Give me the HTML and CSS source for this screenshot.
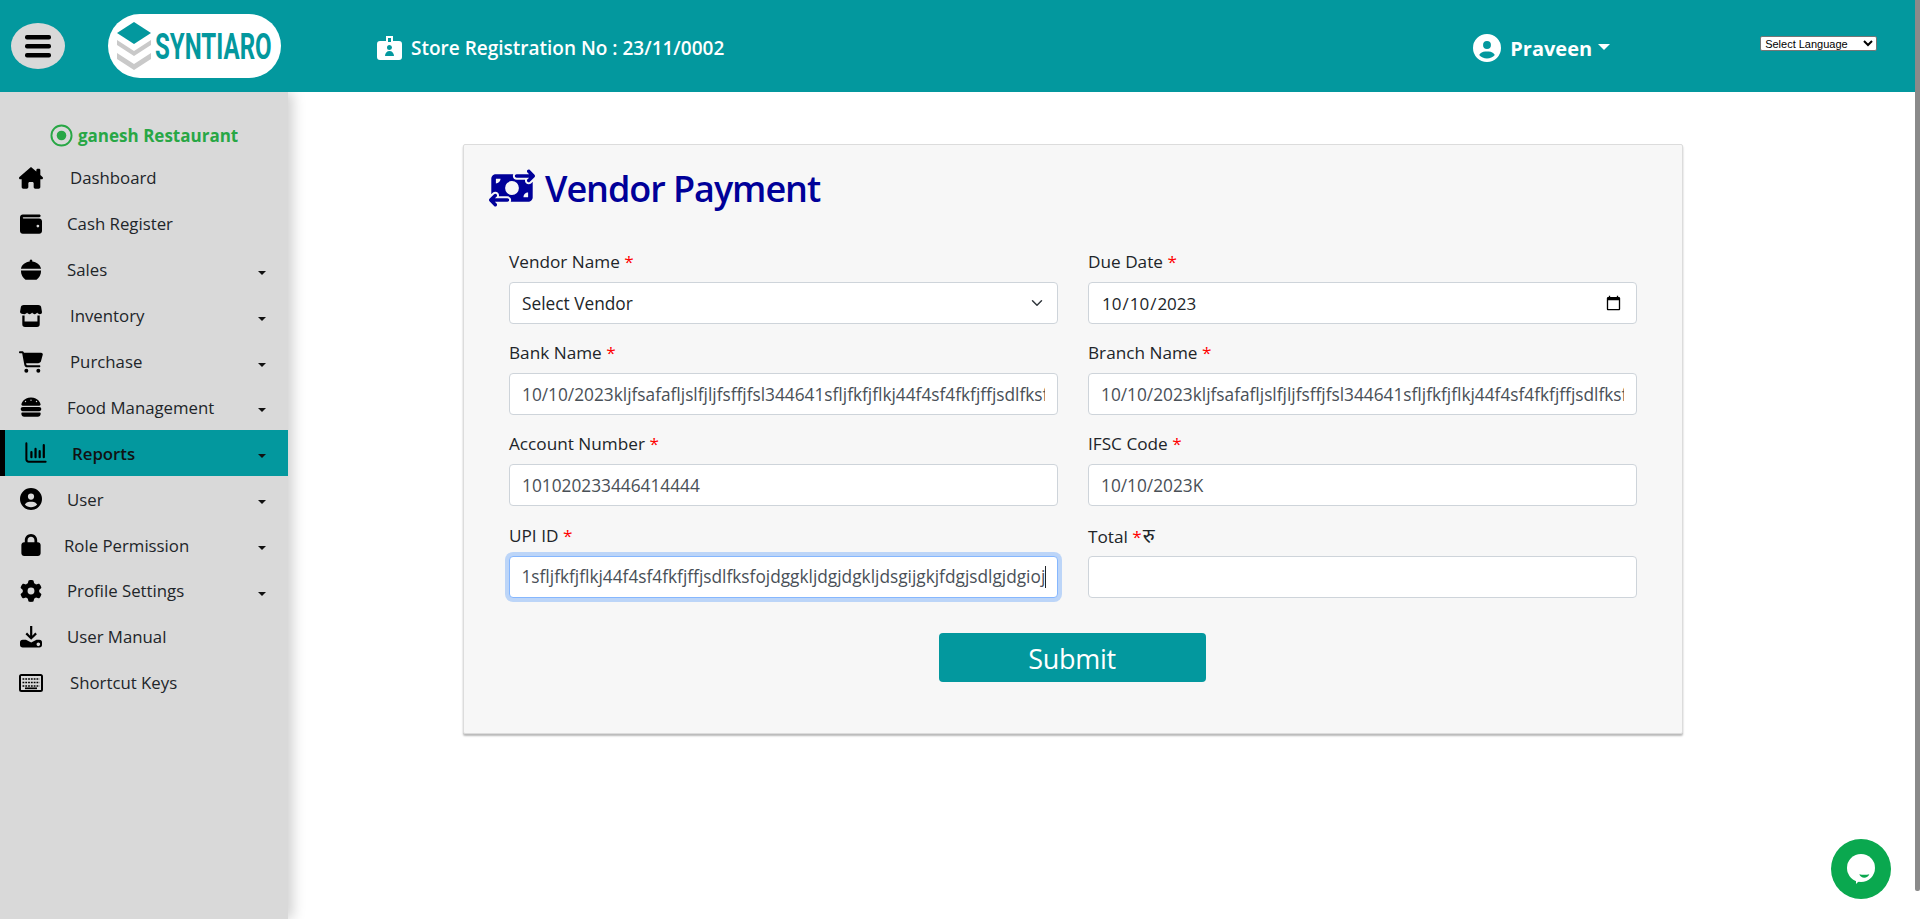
FILE: index.html
```html
<!DOCTYPE html>
<html lang="en">
<head>
<meta charset="UTF-8">
<title>Vendor Payment</title>
<link rel="stylesheet" href="styles.css">
</head>
<body>
<div class="page">
    <div class="page-main">
        <header class="topbar">
            <button class="menu-btn" type="button">
                <svg class="menu-icon" viewBox="0 0 26 24"><rect x="0" y="1" width="26" height="4.5" rx="2"/><rect x="0" y="10" width="26" height="4.5" rx="2"/><rect x="0" y="19" width="26" height="4.5" rx="2"/></svg>
            </button>
            <div class="logo">
                <svg class="logo-mark" viewBox="0 0 34 48">
                    <path fill="#03989e" d="M17 0L34 11 17 22 0 11z"/>
                    <path fill="#c9c9c9" d="M0 18l17 11 17-11v5L17 34 0 23z"/>
                    <path fill="#c9c9c9" d="M0 31l17 11 17-11v6L17 48 0 37z"/>
                </svg>
                <span class="logo-text">SYNTIARO</span>
            </div>
            <div class="store-no">
                <svg class="store-icon" viewBox="0 0 25 24"><path fill-rule="evenodd" d="M9 0h7v5h6a3 3 0 0 1 3 3v13a3 3 0 0 1-3 3H3a3 3 0 0 1-3-3V8a3 3 0 0 1 3-3h6zM11 2v4h3V2zM12.500 9a2.500 2.500 0 1 0 0 5 2.500 2.500 0 0 0 0-5zM8 20h9c0-3-2-5-4.500-5S8 17 8 20z"/></svg>
                <span>Store Registration No : 23/11/0002</span>
            </div>
            <div class="user-menu">
                <svg class="user-icon" viewBox="0 0 512 512"><path d="M399 384.200C376.900 345.800 335.400 320 288 320H224c-47.400 0-88.900 25.800-111 64.200c35.200 39.200 86.200 63.800 143 63.800s107.800-24.700 143-63.800zM0 256a256 256 0 1 1 512 0A256 256 0 1 1 0 256zm256 16a72 72 0 1 0 0-144 72 72 0 1 0 0 144z"/></svg>
                <span class="user-name">Praveen</span>
                <span class="user-caret"></span>
            </div>
            <select class="lang-select"><option>Select Language</option></select>
        </header>
        <div class="layout">
            <aside class="sidebar">
                <div class="outlet">
                    <svg class="outlet-icon" viewBox="0 0 24 24"><circle cx="12" cy="12" r="10.500" fill="none" stroke="#28a745" stroke-width="2"/><circle cx="12" cy="12" r="5" fill="#28a745"/></svg>
                    <span>ganesh Restaurant</span>
                </div>
                <nav>
                    <a class="nav-row">
                        <svg class="nav-icon" viewBox="0 0 576 512"><path d="M543.800 287.600c17 0 32-14 32-32.100c1-9-3-17-11-24L512 185V64c0-17.700-14.300-32-32-32H448c-17.700 0-32 14.300-32 32v36.700L309.500 7c-6-5-14-7-21-7s-15 1-22 8L10 231.500c-7 7-10 15-10 24c0 18 14 32.100 32 32.100h32v69.700c-.1 .9-.1 1.800-.1 2.800V472c0 22.100 17.900 40 40 40h16c1.200 0 2.400-.1 3.600-.2c1.500 .1 3 .2 4.500 .2H160h24c22.100 0 40-17.900 40-40V448 384c0-17.700 14.300-32 32-32h64c17.700 0 32 14.300 32 32v64 24c0 22.100 17.900 40 40 40h24 32.500c1.400 0 2.800 0 4.200-.1c1.100 .1 2.200 .1 3.300 .1h16c22.100 0 40-17.900 40-40V455.800c.3-2.600 .5-5.300 .5-8.100l-.7-160.200h32z"/></svg>
                        <span class="nav-label label-70">Dashboard</span>
                    </a>
                    <a class="nav-row">
                        <svg class="nav-icon" viewBox="0 0 512 512"><path d="M64 32C28.700 32 0 60.700 0 96V416c0 35.300 28.700 64 64 64H448c35.300 0 64-28.700 64-64V192c0-35.300-28.700-64-64-64H80c-8.800 0-16-7.200-16-16s7.200-16 16-16H448c17.700 0 32-14.300 32-32s-14.300-32-32-32H64zM416 272a32 32 0 1 1 0 64 32 32 0 1 1 0-64z"/></svg>
                        <span class="nav-label label-67">Cash Register</span>
                    </a>
                    <a class="nav-row">
                        <svg class="nav-icon" viewBox="0 0 24 24"><path d="M12 0.500a1.500 1.500 0 0 1 1.300 2.200C18 3.200 22 6 23 10.500H1C2 6 6 3.200 10.700 2.700A1.500 1.500 0 0 1 12 0.500z"/><path d="M1 12.500h22c0 4.500-2 8-5 10H6c-3-2-5-5.500-5-10z"/></svg>
                        <span class="nav-label label-67">Sales</span>
                        <span class="nav-caret"></span>
                    </a>
                    <a class="nav-row">
                        <svg class="nav-icon" viewBox="0 0 24 24"><path d="M4 0h16c1.500 0 2.500.8 3 2l1 5.500c0 1.500-1 2.500-2.500 2.500-1.300 0-2.300-.7-2.800-1.700-.5 1-1.500 1.700-2.700 1.700s-2.300-.7-2.800-1.700c-.5 1-1.600 1.700-2.800 1.700s-2.200-.7-2.700-1.700C7.200 9.300 6 10 4.800 10 3 10 0 9 0 7.500L1 2C1.500.8 2.500 0 4 0z"/><path fill-rule="evenodd" d="M2.500 11.500h2.500V18h14v-6.500h2.500V21a3 3 0 0 1-3 3H5.500a3 3 0 0 1-3-3z"/></svg>
                        <span class="nav-label label-70">Inventory</span>
                        <span class="nav-caret"></span>
                    </a>
                    <a class="nav-row">
                        <svg class="nav-icon" viewBox="0 0 576 512"><path d="M0 24C0 10.700 10.700 0 24 0H69.500c22 0 41.500 12.800 50.600 32h411c26.300 0 45.500 25 38.600 50.400l-41 152.300c-8.500 31.400-37 53.300-69.500 53.300H170.700l5.400 28.500c2.200 11.300 12.100 19.500 23.600 19.500H488c13.300 0 24 10.700 24 24s-10.700 24-24 24H199.700c-34.600 0-64.300-24.600-70.700-58.500L77.400 54.500c-.7-3.800-4-6.500-7.900-6.500H24C10.700 48 0 37.300 0 24zM128 464a48 48 0 1 1 96 0 48 48 0 1 1 -96 0zm336-48a48 48 0 1 1 0 96 48 48 0 1 1 0-96z"/></svg>
                        <span class="nav-label label-70">Purchase</span>
                        <span class="nav-caret"></span>
                    </a>
                    <a class="nav-row">
                        <svg class="nav-icon" viewBox="0 0 512 512"><path d="M61.100 224C45 224 32 211 32 194.900c0-1.900 .2-3.700 .6-5.600C37.900 168.300 78.800 32 256 32s218.100 136.300 223.400 157.300c.5 1.900 .6 3.700 .6 5.600c0 16.100-13 29.100-29.100 29.100H61.100zM144 128a16 16 0 1 0 -32 0 16 16 0 1 0 32 0zm240 16a16 16 0 1 0 0-32 16 16 0 1 0 0 32zM272 96a16 16 0 1 0 -32 0 16 16 0 1 0 32 0zM16 304c0-26.500 21.500-48 48-48H448c26.500 0 48 21.500 48 48s-21.500 48-48 48H64c-26.500 0-48-21.500-48-48zm16 96c0-8.800 7.200-16 16-16H464c8.800 0 16 7.200 16 16v16c0 35.300-28.700 64-64 64H96c-35.300 0-64-28.700-64-64V400z"/></svg>
                        <span class="nav-label label-67">Food Management</span>
                        <span class="nav-caret"></span>
                    </a>
                    <a class="nav-row nav-active">
                        <svg class="nav-icon nav-icon-line" viewBox="0 0 24 24" stroke="#000" stroke-linecap="round"><path stroke-width="2.200" d="M1.500 1.500V19a2.500 2.500 0 0 0 2.500 2.500h18.500"/><path stroke-width="2.400" d="M7 11v5.500M11.500 7.500v9M16 10v6.500M20.500 3.500v13"/></svg>
                        <span class="nav-label label-72">Reports</span>
                        <span class="nav-caret"></span>
                    </a>
                    <a class="nav-row">
                        <svg class="nav-icon" viewBox="0 0 512 512"><path d="M399 384.200C376.900 345.800 335.400 320 288 320H224c-47.400 0-88.900 25.800-111 64.200c35.200 39.200 86.200 63.800 143 63.800s107.800-24.700 143-63.800zM0 256a256 256 0 1 1 512 0A256 256 0 1 1 0 256zm256 16a72 72 0 1 0 0-144 72 72 0 1 0 0 144z"/></svg>
                        <span class="nav-label label-67">User</span>
                        <span class="nav-caret"></span>
                    </a>
                    <a class="nav-row">
                        <svg class="nav-icon" viewBox="0 0 448 512"><path d="M144 144v48H304V144c0-44.200-35.800-80-80-80s-80 35.800-80 80zM80 192V144C80 64.500 144.500 0 224 0s144 64.500 144 144v48h16c35.300 0 64 28.700 64 64V448c0 35.300-28.700 64-64 64H64c-35.300 0-64-28.700-64-64V256c0-35.300 28.700-64 64-64H80z"/></svg>
                        <span class="nav-label label-64">Role Permission</span>
                        <span class="nav-caret"></span>
                    </a>
                    <a class="nav-row">
                        <svg class="nav-icon" viewBox="0 0 512 512"><path d="M495.900 166.600c3.200 8.700 .5 18.400-6.400 24.600l-43.300 39.400c1.100 8.300 1.700 16.800 1.700 25.400s-.6 17.100-1.700 25.400l43.300 39.400c6.900 6.200 9.600 15.900 6.400 24.600c-4.400 11.900-9.700 23.300-15.800 34.300l-4.700 8.100c-6.600 11-14 21.400-22.100 31.200c-5.900 7.200-15.700 9.600-24.500 6.800l-55.700-17.700c-13.400 10.300-28.200 18.900-44 25.400l-12.500 57.100c-2 9.100-9 16.300-18.200 17.800c-13.800 2.300-28 3.500-42.500 3.500s-28.700-1.200-42.500-3.500c-9.200-1.500-16.200-8.700-18.200-17.800l-12.500-57.100c-15.800-6.500-30.600-15.100-44-25.400L83.100 425.900c-8.800 2.800-18.600 .3-24.500-6.800c-8.100-9.800-15.500-20.200-22.100-31.200l-4.700-8.100c-6.100-11-11.400-22.400-15.800-34.300c-3.200-8.700-.5-18.400 6.400-24.600l43.300-39.400C64.600 273.100 64 264.600 64 256s.6-17.100 1.700-25.400L22.400 191.200c-6.900-6.200-9.600-15.900-6.400-24.600c4.400-11.900 9.700-23.300 15.800-34.300l4.700-8.100c6.600-11 14-21.400 22.100-31.200c5.900-7.200 15.700-9.600 24.500-6.800l55.700 17.700c13.400-10.300 28.200-18.900 44-25.400l12.500-57.100c2-9.100 9-16.300 18.200-17.800C227.300 1.200 241.500 0 256 0s28.700 1.200 42.500 3.500c9.200 1.500 16.200 8.700 18.200 17.800l12.500 57.100c15.800 6.500 30.600 15.100 44 25.400l55.700-17.700c8.800-2.800 18.600-.3 24.500 6.800c8.100 9.800 15.500 20.200 22.100 31.200l4.700 8.100c6.100 11 11.400 22.400 15.800 34.300zM256 336a80 80 0 1 0 0-160 80 80 0 1 0 0 160z"/></svg>
                        <span class="nav-label label-67">Profile Settings</span>
                        <span class="nav-caret"></span>
                    </a>
                    <a class="nav-row">
                        <svg class="nav-icon" viewBox="0 0 24 24"><path d="M11 0h2.400v10.500l3.300-3.300 1.700 1.700-6.200 6.200-6.200-6.200 1.700-1.700 3.300 3.300z"/><path fill-rule="evenodd" d="M3 15h3.500l5.700 3 5.800-3h3a3 3 0 0 1 3 3v2.500a3 3 0 0 1-3 3H3a3 3 0 0 1-3-3V18a3 3 0 0 1 3-3zM20 18a2 2 0 1 0 0 4 2 2 0 0 0 0-4z"/></svg>
                        <span class="nav-label label-67">User Manual</span>
                    </a>
                    <a class="nav-row">
                        <svg class="nav-icon" viewBox="0 0 24 18"><path fill-rule="evenodd" d="M2.500 0h19A2.500 2.500 0 0 1 24 2.500v13a2.500 2.500 0 0 1-2.500 2.500h-19A2.500 2.500 0 0 1 0 15.500v-13A2.500 2.500 0 0 1 2.500 0zM2 2v14h20V2z"/><path stroke="#000" stroke-width="1.700" d="M3.500 5h17M3.500 8.500h17M3.500 12h17" stroke-dasharray="1.800 1"/><path stroke="#000" stroke-width="1.700" d="M6 14.300h12"/></svg>
                        <span class="nav-label label-70">Shortcut Keys</span>
                    </a>
                </nav>
            </aside>
            <main class="content">
                <section class="card">
                    <h2 class="card-title">
                        <svg class="title-icon" viewBox="0 0 640 512"><path d="M535 41c-9.400-9.400-9.400-24.600 0-33.900s24.600-9.400 33.900 0l64 64c4.500 4.500 7 10.600 7 17s-2.500 12.500-7 17l-64 64c-9.400 9.400-24.600 9.400-33.900 0s-9.400-24.600 0-33.900l23-23L384 112c-13.300 0-24-10.700-24-24s10.700-24 24-24l174.100 0L535 41zM105 377l-23 23L256 400c13.300 0 24 10.700 24 24s-10.700 24-24 24L81.900 448l23 23c9.400 9.400 9.400 24.600 0 33.900s-24.600 9.400-33.900 0L7 441c-4.500-4.500-7-10.600-7-17s2.500-12.500 7-17l64-64c9.400-9.400 24.600-9.400 33.900 0s9.400 24.600 0 33.900zM96 64H337.900c-3.700 7.200-5.900 15.300-5.900 24c0 28.700 23.300 52 52 52l117.400 0c-4 17 .6 35.500 13.800 48.800c20.300 20.300 53.200 20.300 73.500 0L608 169.500V384c0 35.300-28.700 64-64 64H302.100c3.700-7.200 5.900-15.300 5.900-24c0-28.700-23.300-52-52-52l-117.400 0c4-17-.6-35.500-13.800-48.800c-20.300-20.300-53.200-20.300-73.500 0L32 342.500V128c0-35.300 28.700-64 64-64zm64 64H96v64c35.300 0 64-28.700 64-64zM544 320c-35.300 0-64 28.700-64 64h64V320zM320 352a96 96 0 1 0 0-192 96 96 0 1 0 0 192z"/></svg>
                        <span>Vendor Payment</span>
                    </h2>
                    <form class="pay-form">
                        <div class="field">
                            <label class="field-label">Vendor Name <span class="req">*</span></label>
                            <select class="field-control field-select"><option>Select Vendor</option></select>
                        </div>
                        <div class="field">
                            <label class="field-label">Due Date <span class="req">*</span></label>
                            <input class="field-control field-date" type="date" value="2023-10-10">
                        </div>
                        <div class="field">
                            <label class="field-label">Bank Name <span class="req">*</span></label>
                            <input class="field-control" type="text" value="10/10/2023kljfsafafljslfjljfsffjfsl344641sfljfkfjflkj44f4sf4fkfjffjsdlfksfojdggkljdgjdgkljdsgijgkjfdgjsdlgjdgioj">
                        </div>
                        <div class="field">
                            <label class="field-label">Branch Name <span class="req">*</span></label>
                            <input class="field-control" type="text" value="10/10/2023kljfsafafljslfjljfsffjfsl344641sfljfkfjflkj44f4sf4fkfjffjsdlfksfojdggkljdgjdgkljdsgijgkjfdgjsdlgjdgioj">
                        </div>
                        <div class="field">
                            <label class="field-label">Account Number <span class="req">*</span></label>
                            <input class="field-control" type="text" value="101020233446414444">
                        </div>
                        <div class="field">
                            <label class="field-label">IFSC Code <span class="req">*</span></label>
                            <input class="field-control" type="text" value="10/10/2023K">
                        </div>
                        <div class="field field-typing">
                            <label class="field-label">UPI ID <span class="req">*</span></label>
                            <input class="field-control field-focus" id="upiId" type="text" value="10/10/2023kljfsafafljslfjljfsffjfsl344641sfljfkfjflkj44f4sf4fkfjffjsdlfksfojdggkljdgjdgkljdsgijgkjfdgjsdlgjdgioj">
                            <span class="text-caret"></span>
                        </div>
                        <div class="field">
                            <label class="field-label">Total <span class="req">*</span><span class="rupee">रु</span></label>
                            <input class="field-control" type="text">
                        </div>
                        <div class="form-actions">
                            <button class="submit-btn" type="button">Submit</button>
                        </div>
                    </form>
                </section>
            </main>
        </div>
    </div>
    <div class="scroll-rail"><div class="scroll-thumb"></div></div>
</div>
<button class="chat-btn" type="button">
    <svg class="chat-icon" viewBox="0 0 28 30"><circle cx="14" cy="14" r="14" fill="#fff"/><path fill="#fff" d="M9 22h8L9 30z"/><path fill="#0aa84f" d="M12.300 20.200c3 .8 7 .8 10 0-.8 2.300-2.800 3.500-5 3.500s-4.200-1.200-5-3.500z"/></svg>
</button>
<script>
var upi = document.getElementById('upiId');
upi.focus();
upi.setSelectionRange(upi.value.length, upi.value.length);
upi.scrollLeft = upi.scrollWidth;
</script>
</body>
</html>
```

FILE: styles.css
```css
* { box-sizing: border-box; }
html, body { margin: 0; height: 100%; overflow: hidden; }
body { font-family: "Open Sans", "Noto Sans", "Noto Sans Devanagari", sans-serif; background: #fff; color: #212529; }

.page { display: flex; height: 919px; }
.page-main { flex: 1; min-width: 0; display: flex; flex-direction: column; }
.scroll-rail { width: 5px; flex: none; }
.scroll-thumb { width: 5px; height: 891px; background: #8a8a8a; border-radius: 0 0 2px 2px; }

.topbar { height: 92px; background: #03989e; display: flex; align-items: center; color: #fff; flex: none; position: relative; z-index: 2; }
.menu-btn { width: 54px; height: 46px; margin-left: 11px; border: none; border-radius: 50%; background: #d9d9d9; padding: 0; display: flex; align-items: center; justify-content: center; }
.menu-icon { width: 26px; height: 24px; }
.logo { width: 173px; height: 64px; margin-left: 43px; background: #fff; border-radius: 36px; display: flex; align-items: center; padding-left: 9px; }
.logo-mark { width: 34px; height: 48px; flex: none; }
.logo-text { display: block; width: 115px; margin-left: 4px; font-family: Roboto, sans-serif; font-size: 37px; font-weight: 700; color: #03989e; transform: scaleX(.65); transform-origin: left center; white-space: nowrap; }
.store-no { display: flex; align-items: center; margin: 4px 0 0 96px; font-size: 19px; font-weight: 600; }
.store-icon { width: 25px; height: 24px; fill: #fff; margin-right: 9px; }
.user-menu { display: flex; align-items: center; margin: 4px 0 0 749px; }
.user-icon { width: 28px; height: 28px; fill: #fff; }
.user-name { margin-left: 9px; font-size: 20px; font-weight: 700; }
.user-caret { width: 0; height: 0; margin-left: 6px; margin-bottom: 3px; border-top: 6px solid #fff; border-left: 6px solid transparent; border-right: 6px solid transparent; }
.lang-select { width: 117px; height: 15px; margin-left: 150px; margin-bottom: 5px; padding: 0; font-family: "Liberation Sans", Arial, sans-serif; font-size: 11px; color: #000; background: #fff; border: 1px solid #767676; border-radius: 2px; }

.layout { flex: 1; display: flex; min-height: 0; }
.sidebar { width: 288px; flex: none; background: #d9d9d9; box-shadow: 5px 0 12px rgba(0, 0, 0, .18); padding-top: 32px; }
.outlet { display: flex; align-items: center; height: 23px; margin: 0 0 8px 50px; color: #28a745; font-size: 17px; font-weight: 700; }
.outlet-icon { width: 23px; height: 23px; margin-right: 5px; }
.nav-row { display: flex; align-items: center; height: 45.900px; padding-left: 19px; color: #212529; font-size: 16.800px; position: relative; }
.nav-icon { width: 24px; height: 22px; flex: none; fill: #000; }
.nav-icon-line { fill: none; }
.label-64 { margin-left: 21px; }
.label-67 { margin-left: 24px; }
.label-70 { margin-left: 27px; }
.label-72 { margin-left: 24px; font-weight: 600; color: #111; }
.nav-caret { position: absolute; right: 22px; top: 24px; border-top: 4.500px solid #111; border-left: 4.500px solid transparent; border-right: 4.500px solid transparent; }
.nav-active { background: #03989e; border-left: 5px solid #000; }

.content { flex: 1; min-width: 0; padding: 52px 0 0 175px; }
.card { width: 1220px; height: 590px; background: #f7f7f7; border: 1px solid #dcdcdc; box-shadow: 0 2px 2px rgba(0, 0, 0, .28); padding: 21px 46px 0 45px; border-radius: 2px; }
.card-title { display: flex; align-items: center; height: 44px; margin: 0 0 40px -20px; color: #000099; font-size: 36px; font-weight: 600; letter-spacing: -1.050px; }
.title-icon { width: 46px; height: 40px; fill: #000099; margin-right: 10px; }
.pay-form { display: grid; grid-template-columns: 549px 549px; column-gap: 30px; row-gap: 17.200px; }
.field-typing { position: relative; }
.field-label { display: block; height: 24px; line-height: 24px; margin-bottom: 8px; font-size: 17.200px; color: #212529; }
.req { color: #ff0000; }
.rupee { font-size: 20px; margin-left: 1px; }
.field-control { display: block; width: 100%; height: 42px; padding: 6px 12px; font-family: inherit; font-size: 17.300px; color: #495057; background: #fff; border: 1px solid #ced4da; border-radius: 4px; outline: none; }
.field-select { appearance: none; color: #212529; background-image: url("data:image/svg+xml,%3csvg xmlns='http://www.w3.org/2000/svg' viewBox='0 0 16 16'%3e%3cpath fill='none' stroke='%23343a40' stroke-linecap='round' stroke-linejoin='round' stroke-width='2' d='M2 5l6 6 6-6'/%3e%3c/svg%3e"); background-repeat: no-repeat; background-position: right 12px center; background-size: 16px 12px; }
.field-date { color: #212529; font-size: 17px; }
.field-focus { border-color: #86b7fe; box-shadow: 0 0 0 4px rgba(13, 110, 253, .25); }
.text-caret { position: absolute; right: 12px; top: 42px; width: 1px; height: 22px; background: #212529; }
.form-actions { grid-column: 1 / 3; display: flex; justify-content: center; margin-top: 18px; }
.submit-btn { width: 267px; height: 49px; margin-right: 2px; padding-top: 3px; border: none; border-radius: 4px; background: #03989e; color: #fff; font-family: inherit; font-size: 27px; letter-spacing: -.3px; }

.chat-btn { position: fixed; left: 1831px; top: 839px; width: 60px; height: 60px; padding: 0; border: none; border-radius: 50%; background: #0aa84f; display: flex; align-items: center; justify-content: center; }
.chat-icon { width: 28px; height: 30px; }
```
